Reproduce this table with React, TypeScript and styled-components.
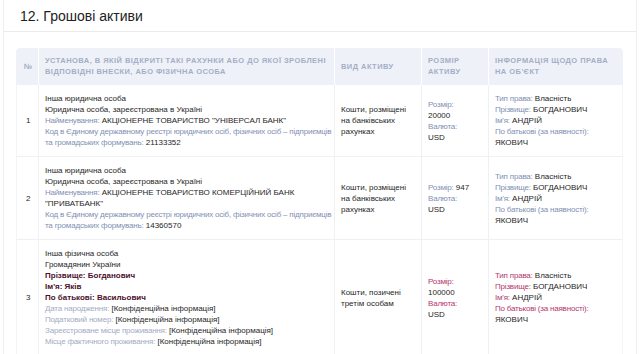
import React from 'react';
import styled, { createGlobalStyle } from 'styled-components';

const Global = createGlobalStyle`
  html, body {
    margin: 0;
    padding: 0;
    background: #ffffff;
    font-family: 'Liberation Sans', Arial, sans-serif;
  }
`;

type Tone = 'plain' | 'alert';

interface Field {
  label?: string;
  value?: string;
  strong?: boolean;
  tone?: Tone;
  muted?: boolean;
}

interface Row {
  n: number;
  who: Field[];
  kind: string[];
  size: Field[];
  info: Field[];
}

const owner = (tone: Tone): Field[] => [
  { label: 'Тип права:', value: 'Власність', tone },
  { label: 'Прізвище:', value: 'БОГДАНОВИЧ', tone },
  { label: "Ім'я:", value: 'АНДРІЙ', tone },
  { label: 'По батькові (за наявності):', tone },
  { value: 'ЯКОВИЧ', tone },
];

const codeLabel =
  'Код в Єдиному державному реєстрі юридичних осіб, фізичних осіб – підприємців та громадських формувань:';

const rows: Row[] = [
  {
    n: 1,
    who: [
      { value: 'Інша юридична особа' },
      { value: 'Юридична особа, зареєстрована в Україні' },
      { label: 'Найменування:', value: 'АКЦІОНЕРНЕ ТОВАРИСТВО "УНІВЕРСАЛ БАНК"' },
      { label: codeLabel, value: '21133352' },
    ],
    kind: ['Кошти, розміщені', 'на банківських', 'рахунках'],
    size: [{ label: 'Розмір:' }, { value: '20000' }, { label: 'Валюта:' }, { value: 'USD' }],
    info: owner('plain'),
  },
  {
    n: 2,
    who: [
      { value: 'Інша юридична особа' },
      { value: 'Юридична особа, зареєстрована в Україні' },
      { label: 'Найменування:', value: 'АКЦІОНЕРНЕ ТОВАРИСТВО КОМЕРЦІЙНИЙ БАНК "ПРИВАТБАНК"' },
      { label: codeLabel, value: '14360570' },
    ],
    kind: ['Кошти, розміщені', 'на банківських', 'рахунках'],
    size: [{ label: 'Розмір:', value: '947' }, { label: 'Валюта:' }, { value: 'USD' }],
    info: owner('plain'),
  },
  {
    n: 3,
    who: [
      { value: 'Інша фізична особа' },
      { value: 'Громадянин України' },
      { value: 'Прізвище: Богданович', strong: true },
      { value: "Ім'я: Яків", strong: true },
      { value: 'По батькові: Васильович', strong: true },
      { label: 'Дата народження:', value: '[Конфіденційна інформація]', muted: true },
      { label: 'Податковий номер:', value: '[Конфіденційна інформація]', muted: true },
      { label: 'Зареєстроване місце проживання:', value: '[Конфіденційна інформація]', muted: true },
      { label: 'Місце фактичного проживання:', value: '[Конфіденційна інформація]', muted: true },
    ],
    kind: ['Кошти, позичені', 'третім особам'],
    size: [
      { label: 'Розмір:', tone: 'alert' },
      { value: '100000' },
      { label: 'Валюта:', tone: 'alert' },
      { value: 'USD' },
    ],
    info: owner('alert'),
  },
];

const columns = [23, 296, 87, 67, 134];

const FieldLine = ({ f }: { f: Field }) => (
  <Line $strong={f.strong}>
    {f.label && (
      <Label $tone={f.tone} $muted={f.muted}>
        {f.label}
      </Label>
    )}
    {f.label && f.value ? ' ' : null}
    {f.value}
  </Line>
);

const App = () => {
  return (
    <>
      <Global />
      <Assets.Panel>
        <Assets.Title>12. Грошові активи</Assets.Title>
        <Assets.Body>
          <Assets.Table>
            <colgroup>
              {columns.map((w, i) => (
                <Assets.Col key={i} $w={w} />
              ))}
            </colgroup>
            <thead>
              <tr>
                <Assets.Th>№</Assets.Th>
                <Assets.Th>
                  Установа, в якій відкриті такі рахунки або до якої зроблені відповідні внески, або фізична особа
                </Assets.Th>
                <Assets.Th>Вид активу</Assets.Th>
                <Assets.Th>Розмір активу</Assets.Th>
                <Assets.Th>Інформація щодо права на об'єкт</Assets.Th>
              </tr>
            </thead>
            <tbody>
              {rows.map((r) => (
                <tr key={r.n}>
                  <Assets.Td>{r.n}</Assets.Td>
                  <Assets.Td>
                    {r.who.map((f, i) => (
                      <FieldLine key={i} f={f} />
                    ))}
                  </Assets.Td>
                  <Assets.Td>
                    {r.kind.map((k) => (
                      <Line key={k}>{k}</Line>
                    ))}
                  </Assets.Td>
                  <Assets.Td>
                    {r.size.map((f, i) => (
                      <FieldLine key={i} f={f} />
                    ))}
                  </Assets.Td>
                  <Assets.Td>
                    {r.info.map((f, i) => (
                      <FieldLine key={i} f={f} />
                    ))}
                  </Assets.Td>
                </tr>
              ))}
            </tbody>
          </Assets.Table>
        </Assets.Body>
      </Assets.Panel>
    </>
  );
};

export default App;

const Line = styled.div<{ $strong?: boolean }>`
  font-size: 8px;
  line-height: 11px;
  color: ${(p) => (p.$strong ? '#4a0f2e' : '#262626')};
  font-weight: ${(p) => (p.$strong ? 700 : 400)};
`;

// labels render a touch narrower than values in the original
const Label = styled.span<{ $tone?: Tone; $muted?: boolean }>`
  letter-spacing: -0.2px;
  color: ${(p) => (p.$tone === 'alert' ? '#b4376e' : p.$muted ? '#a3acc4' : '#7f91b4')};
`;

class Assets {
  static Panel = styled.div`
    margin: 0 3px;
    min-height: 354px;
    border-left: 1px solid #efefef;
    border-right: 1px solid #efefef;
    box-sizing: border-box;
  `;

  static Title = styled.h2`
    margin: 0;
    height: 31px;
    padding-left: 16px;
    display: flex;
    align-items: center;
    font-size: 14px;
    font-weight: 400;
    color: #222222;
    border-bottom: 1px solid #ebebeb;
  `;

  static Body = styled.div`
    padding: 16px 13px 0 12px;
  `;

  static Table = styled.table`
    width: 607px;
    border-collapse: separate;
    border-spacing: 0;
    table-layout: fixed;
  `;

  static Col = styled.col<{ $w: number }>`
    width: ${(p) => p.$w}px;
  `;

  static Th = styled.th`
    background: #eef2f8;
    color: #a5aec6;
    font-size: 7.5px;
    line-height: 11px;
    font-weight: 700;
    letter-spacing: 0.45px;
    text-transform: uppercase;
    text-align: left;
    vertical-align: middle;
    padding: 7px 2px 8px 6px;
    border-right: 1px solid #ffffff;

    &:first-child {
      border-top-left-radius: 4px;
      padding: 7px 4px 8px 8px;
    }
    &:last-child {
      border-top-right-radius: 4px;
      border-right: none;
    }
  `;

  static Td = styled.td`
    font-size: 8px;
    line-height: 11px;
    color: #262626;
    vertical-align: middle;
    padding: 8px 2px 8px 6px;
    border-bottom: 1px solid #eef0f4;
    border-right: 1px solid #eef0f4;

    &:first-child {
      border-left: 1px solid #f3f4f7;
      padding-left: 9px;
    }
    &:last-child {
      border-right: 1px solid #f3f4f7;
    }
  `;
}
